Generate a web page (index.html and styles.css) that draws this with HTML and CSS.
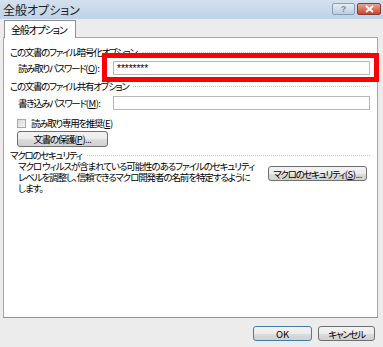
FILE: index.html
```html
<!DOCTYPE html>
<html lang="ja">
<head>
  <meta charset="UTF-8">
  <title>全般オプション</title>
  <link rel="stylesheet" href="styles.css">
</head>
<body>
  <div class="dialog">
    <div class="titlebar">
      <span class="title">全般オプション</span>
      <div class="caption-btns">
        <span class="cbtn help">?</span>
        <span class="cbtn close">
          <svg width="11" height="8" viewBox="0 0 11 8"><path d="M2 1 L9 7 M9 1 L2 7" stroke="#fff" stroke-width="2" fill="none"/></svg>
        </span>
      </div>
    </div>

    <div class="tabs">
      <span class="tab">全般オプション</span>
    </div>

    <div class="panel">
      <div class="group-head"><span>この文書のファイル暗号化オプション</span><i class="rule"></i></div>
      <div class="row">
        <label class="lbl">読み取りパスワード<span class="key">(<u>O</u>):</span></label>
        <div class="field">********</div>
        <div class="highlight"></div>
      </div>

      <div class="group-head second"><span>この文書のファイル共有オプション</span><i class="rule"></i></div>
      <div class="row row-2">
        <label class="lbl">書き込みパスワード<span class="key">(<u>M</u>):</span></label>
        <div class="field"></div>
      </div>

      <div class="check-row">
        <span class="checkbox"></span>
        <span>読み取り専用を推奨<span class="key">(<u>E</u>)</span></span>
      </div>

      <button class="btn protect">文書の保護<span class="key">(<u>P</u>)...</span></button>

      <div class="group-head third"><span>マクロのセキュリティ</span><i class="rule"></i></div>
      <div class="macro-row">
        <p class="macro-text">マクロ ウィルスが含まれている可能性のあるファイルのセキュリティ<br>レベルを調整し、信頼できるマクロ開発者の名前を特定するように<br>します。</p>
        <button class="btn macro-btn">マクロのセキュリティ<span class="key">(<u>S</u>)...</span></button>
      </div>
    </div>

    <div class="footer">
      <button class="btn ok">OK</button>
      <button class="btn cancel">キャンセル</button>
    </div>
  </div>
</body>
</html>
```

FILE: styles.css
```css
body {
  margin: 0;
  padding: 0;
  background: #ececec;
  font-family: "Noto Sans CJK JP", "Noto Sans", sans-serif;
  font-feature-settings: "palt";
  font-size: 9.5px;
  letter-spacing: -1.3px;
  color: #000;
}

.dialog {
  width: 383px;
  height: 347px;
  background: #ececec;
}

.key {
  letter-spacing: -0.5px;
}

/* title bar */
.titlebar {
  height: 19px;
  display: flex;
  align-items: center;
  justify-content: space-between;
  background: linear-gradient(to bottom, #d3e0ee, #c0d2e7);
}

.title {
  margin-left: 3px;
  font-size: 12px;
  letter-spacing: 0;
  color: #222;
}

.caption-btns {
  display: flex;
  gap: 2px;
  margin-right: 2px;
  align-self: flex-start;
  margin-top: 3px;
}

.cbtn {
  height: 10px;
  width: 21px;
  border: 1px solid #8b9db3;
  border-radius: 2px;
  display: flex;
  align-items: center;
  justify-content: center;
  font-family: "Liberation Sans", sans-serif;
  font-size: 9px;
  letter-spacing: 0;
  line-height: 10px;
  font-weight: bold;
}

.help {
  background: linear-gradient(to bottom, #e4ecf5, #bccde2);
  color: #7a8ca3;
}

.close {
  width: 22px;
  border-color: #8d3a2f;
  background: linear-gradient(to bottom, #e8a493, #c9452f);
}

/* tabs */
.tabs {
  height: 17px;
  padding-top: 1px;
  padding-left: 4px;
  display: flex;
  align-items: flex-end;
}

.tab {
  position: relative;
  z-index: 1;
  height: 17px;
  margin-bottom: -1px;
  padding: 0 8px 0 6px;
  background: #fff;
  border: 1px solid #8e9297;
  border-bottom: none;
  line-height: 17px;
  font-size: 10px;
  letter-spacing: -1.2px;
}

.panel {
  margin-left: 3px;
  width: 375px;
  height: 281px;
  box-sizing: border-box;
  background: #fff;
  border: 1px solid #a3a6ab;
  border-bottom-color: #8e9196;
}

.group-head {
  display: flex;
  align-items: center;
  margin: 8px 7px 0 6px;
  line-height: 12px;
  height: 12px;
  white-space: nowrap;
}

.group-head.second {
  margin-top: 5px;
}

.group-head.third {
  margin-top: 2px;
}

.rule {
  flex: 1;
  margin-left: 5px;
  border-top: 1px dotted #c9c9c9;
}

.row {
  position: relative;
  display: flex;
  align-items: center;
  margin: 3px 7px 0 14px;
  height: 14px;
}

.row-2 {
  margin-top: 4px;
}

.lbl {
  width: 95px;
  flex: none;
  white-space: nowrap;
}

.field {
  flex: 1;
  height: 14px;
  box-sizing: border-box;
  border: 1px solid #b8b8b8;
  background: #fff;
  font-family: "Liberation Sans", sans-serif;
  font-size: 10px;
  letter-spacing: 0;
  line-height: 14px;
  padding-left: 3px;
}

.highlight {
  position: absolute;
  left: 84px;
  right: -9px;
  top: -8px;
  bottom: -7px;
  border: 5px solid #ff0000;
}

.check-row {
  display: flex;
  align-items: center;
  margin: 7px 0 0 13px;
  height: 12px;
  white-space: nowrap;
}

.checkbox {
  width: 9px;
  height: 9px;
  box-sizing: border-box;
  border: 1px solid #a8a8a8;
  background: linear-gradient(135deg, #d8d8d8, #f4f4f4);
  margin-right: 5px;
}

.btn {
  font-family: inherit;
  font-feature-settings: "palt";
  font-size: 9.5px;
  letter-spacing: -1.3px;
  color: #000;
  height: 16px;
  padding: 0;
  line-height: 14px;
  white-space: nowrap;
  border: 1px solid #707070;
  border-radius: 3px;
  background: linear-gradient(to bottom, #f3f3f3 0%, #ebebeb 50%, #dddddd 51%, #cfcfcf 100%);
}

.protect {
  display: block;
  width: 91px;
  margin: 2px 0 0 13px;
}

.macro-row {
  display: flex;
  align-items: flex-start;
  margin: 0 0 0 14px;
}

.macro-text {
  margin: 0;
  width: 250px;
  white-space: nowrap;
  line-height: 11px;
  letter-spacing: -1.1px;
}

.macro-btn {
  width: 99px;
  height: 15px;
  margin-top: 5px;
}

.footer {
  display: flex;
  justify-content: flex-end;
  gap: 6px;
  padding: 8px 8px 0 0;
}

.ok,
.cancel {
  height: 15px;
  width: 59px;
}

.ok {
  border-color: #3c7fb1;
  letter-spacing: 0;
}

.cancel {
  width: 57px;
}
```
